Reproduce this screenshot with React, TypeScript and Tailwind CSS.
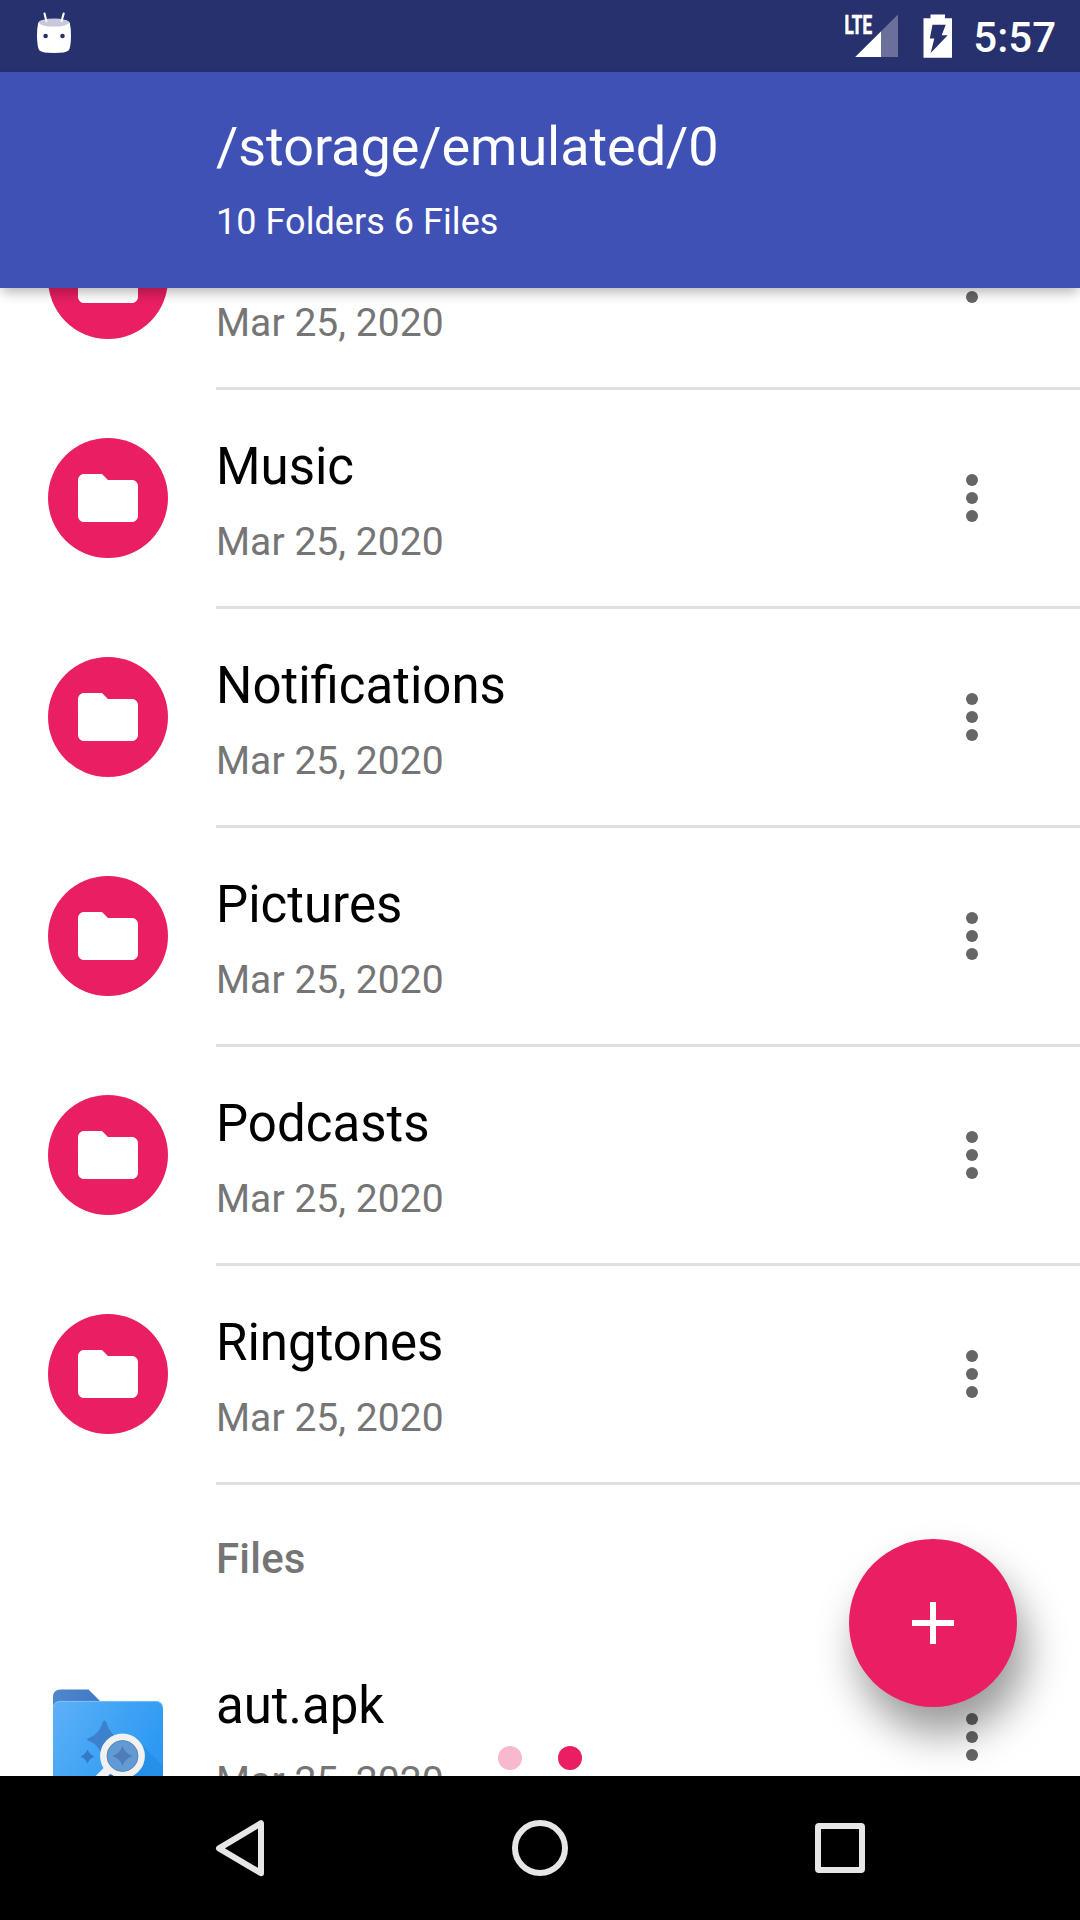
import React from "react";

const folders = ["", "Music", "Notifications", "Pictures", "Podcasts", "Ringtones"];

function StatusBar() {
  return (
    <div className="flex h-[72px] items-start bg-[#27316d] text-white">
      <svg className="ml-[36px] mt-[12px] h-[42px] w-[36px]" viewBox="0 0 36 42">
        <path d="M2.2 11Q3 7.5 18 7.5T33.8 11Q35.2 17 35 24Q34.800 36 32.5 38.500Q30 41 18 41T3.500 38.500Q1.200 36 1 24Q0.800 17 2.200 11Z" fill="#fff" />
        <ellipse cx="18" cy="10.600" rx="15" ry="4" fill="#c7c8da" />
        <path d="M8.500 1.500L10.400 9M27.700 1.500L25.600 9" stroke="#fff" strokeWidth="2.100" strokeLinecap="round" />
        <circle cx="9.600" cy="24" r="2.300" fill="#27316d" />
        <circle cx="26.500" cy="24" r="2.300" fill="#27316d" />
      </svg>
      <svg className="ml-auto h-[72px] w-[54px]" viewBox="0 0 54 72">
        <path d="M53 14.500V57H10Z" fill="#6a7099" />
        <path d="M36 31.500V57H10.300Z" fill="#fff" />
        <text x="-0.500" y="33.500" textLength="27.500" lengthAdjust="spacingAndGlyphs" fill="#fff" stroke="#fff" strokeWidth="0.700" className="font-['Roboto'] text-[26px] font-bold">LTE</text>
      </svg>
      <svg className="ml-[24px] h-[72px] w-[30px]" viewBox="0 0 30 72">
        <path d="M7.500 14.500H22V18.300H29V57.700H0.500V18.300H7.500Z" fill="#fff" />
        <path d="M9.500 24.700H22.700L18.700 35.200H24.700L7.700 53L11.300 38.500H6.800Z" fill="#27316d" />
      </svg>
      <div className="ml-[20px] mr-[24px] mt-[13px] text-[42px] leading-[49px] font-medium">5:57</div>
    </div>
  );
}

function MoreIcon() {
  return (
    <svg className="h-[72px] w-[72px]" viewBox="0 0 24 24" fill="#666">
      <circle cx="12" cy="6" r="2" />
      <circle cx="12" cy="12" r="2" />
      <circle cx="12" cy="18" r="2" />
    </svg>
  );
}

function FolderIcon() {
  return (
    <div className="flex size-[120px] items-center justify-center rounded-full bg-[#e91e63]">
      <svg className="size-[72px]" viewBox="0 0 24 24" fill="#fff">
        <path d="M10 4H4c-1.100 0-1.990.900-1.990 2L2 18c0 1.100.900 2 2 2h16c1.100 0 2-.900 2-2V8c0-1.100-.900-2-2-2h-8l-2-2z" />
      </svg>
    </div>
  );
}

function ApkIcon() {
  return (
    <svg className="size-[120px]" viewBox="0 0 120 120">
      <defs>
        <linearGradient id="front" x1="0" y1="0" x2="1" y2="0.500">
          <stop offset="0" stopColor="#5fb0f7" />
          <stop offset="0.500" stopColor="#42a5f5" />
          <stop offset="1" stopColor="#2c98f2" />
        </linearGradient>
        <linearGradient id="back" x1="0" y1="0" x2="1" y2="0">
          <stop offset="0" stopColor="#4f88cd" />
          <stop offset="1" stopColor="#3f78c6" />
        </linearGradient>
      </defs>
      <path d="M5 40V20Q5 12.500 12.500 12.500H40.500L53 25V40Z" fill="url(#back)" />
      <path d="M5 120V31.500Q5 24 12.500 24H107.500Q115 24 115 31.500V120Z" fill="url(#front)" />
      <path d="M5.500 30Q6.500 24.400 12.500 24.400H107.500Q113.500 24.400 114.500 30" fill="none" stroke="#8cc6fa" strokeWidth="0.800" />
      <path d="M88 62L115 89V120H60Z" fill="#2388e0" opacity="0.600" />
      <path d="M56.500 43.500Q58 43.500 59 47Q62 57.500 72 62Q76 63 72 64Q62 69 59 78.500Q56.500 83 54 78.500Q50 67 41 64Q37 62.500 41 61Q51 57 54 47Q55 43.500 56.500 43.500Z" fill="#3c80ce" />
      <path d="M39.500 72.500Q41.500 77.500 46.500 79.500Q41.500 81.500 39.500 86.500Q37.500 81.500 32.500 79.500Q37.500 77.500 39.500 72.500Z" fill="#3478c8" />
      <path d="M62 91L48 105" stroke="#f1f1f1" strokeWidth="9" />
      <circle cx="74.500" cy="79" r="19" fill="#629bd3" stroke="#f1f1f1" strokeWidth="6.800" />
      <circle cx="74.500" cy="79" r="15.500" fill="none" stroke="#4d7fae" strokeWidth="0.800" />
      <path d="M74.500 69Q77 76.500 84.500 79Q77 81.500 74.500 89Q72 81.500 64.500 79Q72 76.500 74.500 69Z" fill="#4f7dbb" />
      <path d="M60 99L62.500 97L66 99Z" fill="#275891" />
    </svg>
  );
}

function Row({ name, icon, divider = true }: { name: string; icon: React.ReactNode; divider?: boolean }) {
  return (
    <div className="flex h-[219px] shrink-0 pl-[48px]">
      <div className="mt-[48px] w-[168px]">{icon}</div>
      <div className={divider ? "flex flex-1 border-b-[3px] border-[#e0e0e0]" : "flex flex-1"}>
        <div className="flex-1 pt-[46px]">
          <div className="h-[61px] text-[51px] leading-[61px] text-black">{name}</div>
          <div className="mt-[22px] text-[39px] leading-[46px] tracking-[0.06px] text-[#757575]">Mar 25, 2020</div>
        </div>
        <div className="mr-[72px] mt-[72px]">
          <MoreIcon />
        </div>
      </div>
    </div>
  );
}

export default function App() {
  return (
    <div className="relative flex h-[1920px] w-[1080px] flex-col overflow-hidden bg-white font-['Roboto',sans-serif]">
      <StatusBar />
      <header className="relative z-10 h-[216px] bg-[#3f51b5] pl-[216px] pt-[43px] text-white shadow-[0_6px_12px_-2px_rgba(0,0,0,0.3)]">
        <h1 className="text-[54px] leading-[63px] tracking-[-0.05px]">/storage/emulated/0</h1>
        <p className="mt-[23px] text-[36px] leading-[42px] tracking-[0.05px]">10 Folders 6 Files</p>
      </header>
      <main className="flex h-[1488px] flex-col overflow-hidden bg-white">
        <div className="-mt-[117px] flex flex-col">
          {folders.map((name) => (
            <Row key={name} name={name} icon={<FolderIcon />} />
          ))}
          <div className="h-[144px] pl-[216px] pt-[49px] text-[42px] leading-[49px] font-medium tracking-[0.2px] text-[#757575]">Files</div>
          <Row name="aut.apk" icon={<ApkIcon />} divider={false} />
        </div>
      </main>
      <div className="absolute bottom-[150px] left-[498px] flex gap-[36px]">
        <span className="size-[24px] rounded-full bg-[#f8b9cf]" />
        <span className="size-[24px] rounded-full bg-[#e91e63]" />
      </div>
      <button className="absolute bottom-[213px] right-[63px] flex size-[168px] items-center justify-center rounded-full bg-[#e91e63] shadow-[9px_27px_42px_rgba(0,0,0,0.4)]">
        <svg className="size-[72px]" viewBox="0 0 24 24" fill="#fff">
          <path d="M19 13h-6v6h-2v-6H5v-2h6V5h2v6h6v2z" />
        </svg>
      </button>
      <nav className="relative flex h-[144px] items-center justify-center gap-[240px] bg-black">
        <svg className="size-[60px]" viewBox="0 0 60 60" fill="none" stroke="#e6e6e6" strokeWidth="6" strokeLinejoin="round">
          <path d="M9 30.300L51 5.200V55.200Z" />
        </svg>
        <svg className="size-[60px]" viewBox="0 0 60 60" fill="none" stroke="#e6e6e6" strokeWidth="6">
          <circle cx="30" cy="30" r="25" />
        </svg>
        <svg className="size-[60px]" viewBox="0 0 60 60">
          <path fillRule="evenodd" fill="#e6e6e6" d="M9 5H51Q55 5 55 9V51Q55 55 51 55H9Q5 55 5 51V9Q5 5 9 5ZM11 11V49H49V11Z" />
        </svg>
      </nav>
    </div>
  );
}
